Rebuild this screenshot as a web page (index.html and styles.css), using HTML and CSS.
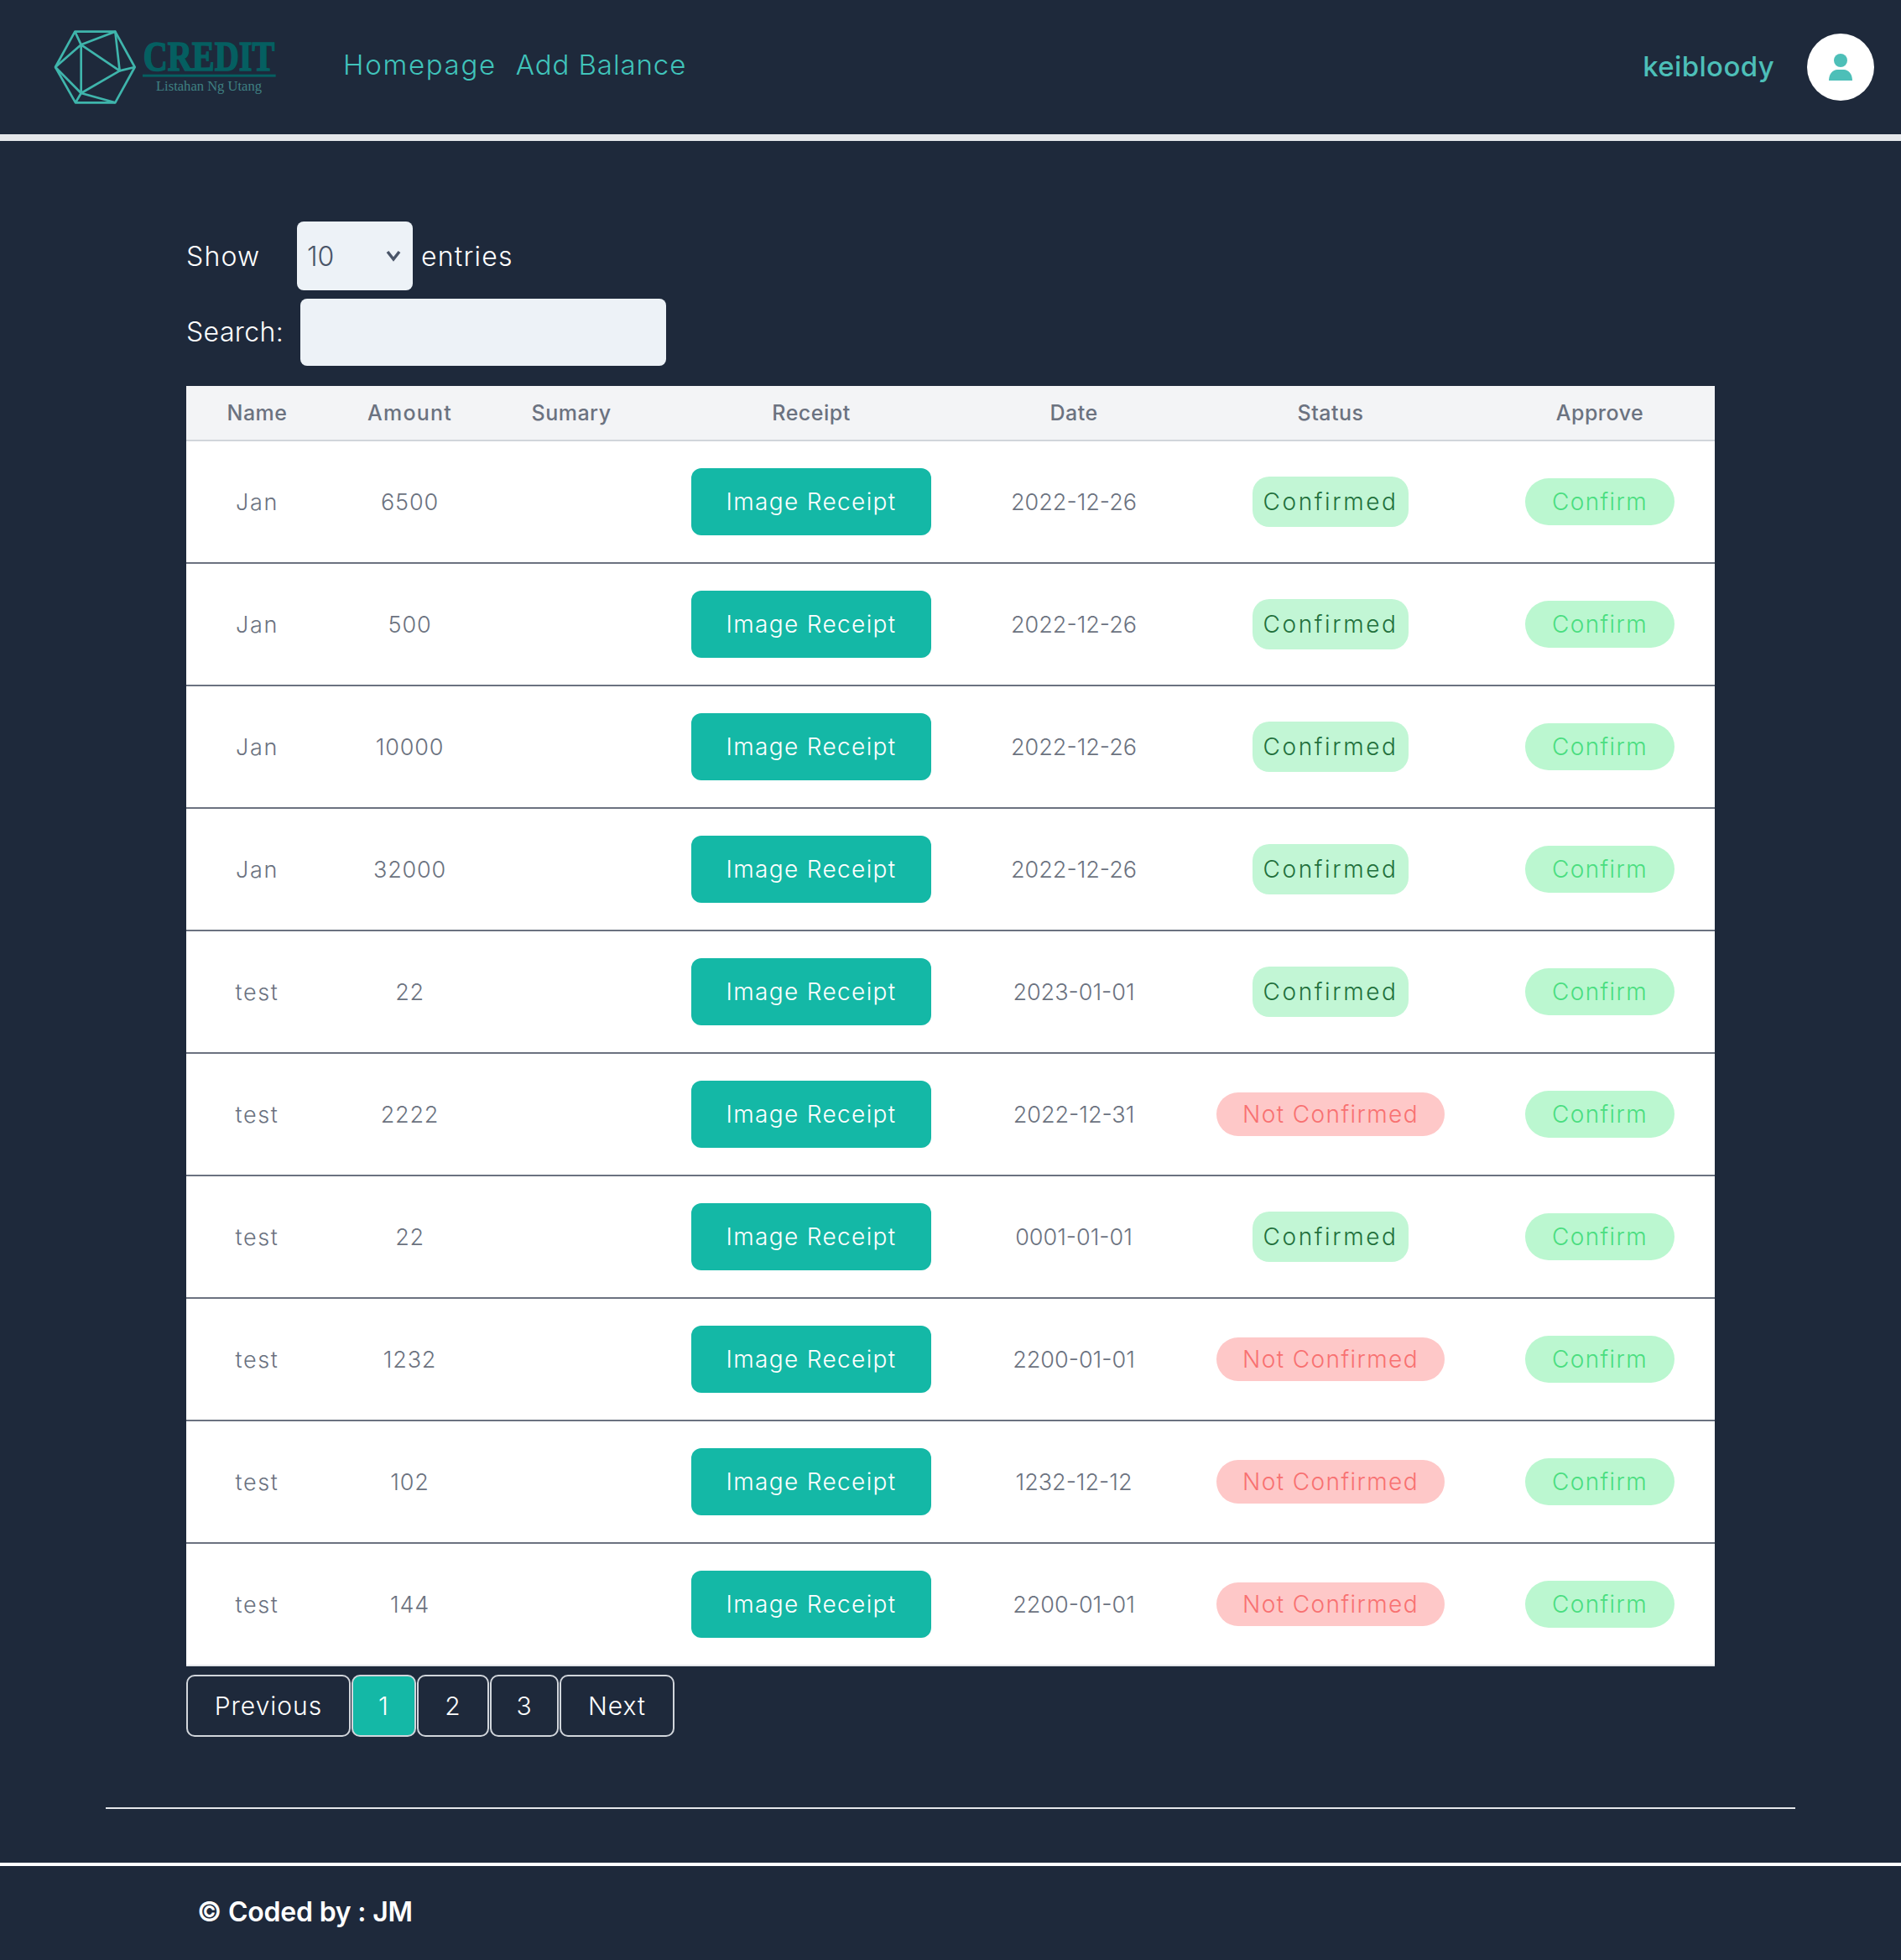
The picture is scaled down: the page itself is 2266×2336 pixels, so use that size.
FILE: index.html
```html
<!DOCTYPE html>
<html lang="en">
<head>
    <meta charset="UTF-8">
    <meta name="viewport" content="width=device-width, initial-scale=1.0">
    <title>Credit - Listahan Ng Utang</title>
    <link rel="stylesheet" href="styles.css">
</head>
<body>
    <header class="topbar">
        <svg class="logo" viewBox="0 0 900 330" width="300" height="110" role="img" aria-label="Credit logo">
            <g class="logo-lines">
                <path d="M118 38H262L332 165L262 292H120L48 165Z"/>
                <path d="M118 38L140 85L262 38L278 178L332 165"/>
                <path d="M48 165L140 85V258L48 165"/>
                <path d="M140 85L278 178L140 258L262 292"/>
                <path d="M140 258L120 292"/>
            </g>
            <text class="logo-name" transform="translate(362 176) scale(0.795 1)">CREDIT</text>
            <rect class="logo-rule" x="360" y="191" width="476" height="9"/>
            <text class="logo-sub" x="408" y="250" textLength="378" lengthAdjust="spacingAndGlyphs">Listahan Ng Utang</text>
        </svg>
        <nav class="nav">
            <a href="#" class="nav-home">Homepage</a>
            <a href="#" class="nav-add">Add Balance</a>
        </nav>
        <div class="user">
            <span class="username">keibloody</span>
            <span class="avatar">
                <svg viewBox="0 0 28 32" width="28" height="32">
                    <circle cx="14" cy="8" r="8"/>
                    <path d="M0 32C0 24 5 19 10 19H18C23 19 28 24 28 32Z"/>
                </svg>
            </span>
        </div>
    </header>

    <main class="content">
        <div class="length-row">
            <label class="label show-label">Show</label>
            <div class="select-box">
                <span>10</span>
                <svg viewBox="0 0 20 14" width="20" height="14"><path d="M3 2L10 11L17 2"/></svg>
            </div>
            <span class="label entries-label">entries</span>
        </div>
        <div class="search-row">
            <label class="label search-label">Search:</label>
            <input class="search-input" type="text">
        </div>

        <table class="data-table">
            <thead>
                <tr>
                    <th class="c-name">Name</th>
                    <th class="c-amount">Amount</th>
                    <th class="c-summary">Sumary</th>
                    <th class="c-receipt">Receipt</th>
                    <th class="c-date">Date</th>
                    <th class="c-status">Status</th>
                    <th class="c-approve">Approve</th>
                </tr>
            </thead>
            <tbody>
                <tr>
                    <td>Jan</td><td>6500</td><td></td>
                    <td><a href="#" class="btn-receipt">Image Receipt</a></td>
                    <td>2022-12-26</td>
                    <td><span class="badge-ok">Confirmed</span></td>
                    <td><a href="#" class="btn-confirm">Confirm</a></td>
                </tr>
                <tr>
                    <td>Jan</td><td>500</td><td></td>
                    <td><a href="#" class="btn-receipt">Image Receipt</a></td>
                    <td>2022-12-26</td>
                    <td><span class="badge-ok">Confirmed</span></td>
                    <td><a href="#" class="btn-confirm">Confirm</a></td>
                </tr>
                <tr>
                    <td>Jan</td><td>10000</td><td></td>
                    <td><a href="#" class="btn-receipt">Image Receipt</a></td>
                    <td>2022-12-26</td>
                    <td><span class="badge-ok">Confirmed</span></td>
                    <td><a href="#" class="btn-confirm">Confirm</a></td>
                </tr>
                <tr>
                    <td>Jan</td><td>32000</td><td></td>
                    <td><a href="#" class="btn-receipt">Image Receipt</a></td>
                    <td>2022-12-26</td>
                    <td><span class="badge-ok">Confirmed</span></td>
                    <td><a href="#" class="btn-confirm">Confirm</a></td>
                </tr>
                <tr>
                    <td>test</td><td>22</td><td></td>
                    <td><a href="#" class="btn-receipt">Image Receipt</a></td>
                    <td>2023-01-01</td>
                    <td><span class="badge-ok">Confirmed</span></td>
                    <td><a href="#" class="btn-confirm">Confirm</a></td>
                </tr>
                <tr>
                    <td>test</td><td>2222</td><td></td>
                    <td><a href="#" class="btn-receipt">Image Receipt</a></td>
                    <td>2022-12-31</td>
                    <td><span class="badge-no">Not Confirmed</span></td>
                    <td><a href="#" class="btn-confirm">Confirm</a></td>
                </tr>
                <tr>
                    <td>test</td><td>22</td><td></td>
                    <td><a href="#" class="btn-receipt">Image Receipt</a></td>
                    <td>0001-01-01</td>
                    <td><span class="badge-ok">Confirmed</span></td>
                    <td><a href="#" class="btn-confirm">Confirm</a></td>
                </tr>
                <tr>
                    <td>test</td><td>1232</td><td></td>
                    <td><a href="#" class="btn-receipt">Image Receipt</a></td>
                    <td>2200-01-01</td>
                    <td><span class="badge-no">Not Confirmed</span></td>
                    <td><a href="#" class="btn-confirm">Confirm</a></td>
                </tr>
                <tr>
                    <td>test</td><td>102</td><td></td>
                    <td><a href="#" class="btn-receipt">Image Receipt</a></td>
                    <td>1232-12-12</td>
                    <td><span class="badge-no">Not Confirmed</span></td>
                    <td><a href="#" class="btn-confirm">Confirm</a></td>
                </tr>
                <tr>
                    <td>test</td><td>144</td><td></td>
                    <td><a href="#" class="btn-receipt">Image Receipt</a></td>
                    <td>2200-01-01</td>
                    <td><span class="badge-no">Not Confirmed</span></td>
                    <td><a href="#" class="btn-confirm">Confirm</a></td>
                </tr>
            </tbody>
        </table>

        <div class="pager">
            <a href="#" class="page p-prev">Previous</a>
            <a href="#" class="page p-one active">1</a>
            <a href="#" class="page p-two">2</a>
            <a href="#" class="page p-three">3</a>
            <a href="#" class="page p-next">Next</a>
        </div>
    </main>

    <hr class="divider">

    <footer class="footer">© Coded by : JM</footer>
</body>
</html>
```

FILE: styles.css
```css
* {box-sizing: border-box;}
body {margin: 0; background: #1e293b; font-family: Inter, "Noto Sans", sans-serif; color: #fff;}
a {text-decoration: none;}

/* header */
.topbar {display: flex; align-items: center; height: 168px; padding: 0 32px 0 50px; border-bottom: 8px solid #e5e7eb;}
.logo {display: block; flex: none;}
.logo-lines {fill: none; stroke: #3fb5ac; stroke-width: 8; stroke-linejoin: round;}
.logo-name {font-family: "Liberation Serif", serif; font-weight: bold; font-size: 152px; fill: #055f61; stroke: #055f61; stroke-width: 5;}
.logo-rule {fill: #055f61;}
.logo-sub {font-family: "Liberation Serif", serif; font-size: 50px; fill: #3f8082;}
.nav {display: flex; gap: 23px; margin-left: 59px; margin-top: -7px; font-size: 33px; font-weight: 300;}
.nav a {color: #40c4bb;}
.nav-home {letter-spacing: 1.7px;}
.nav-add {letter-spacing: 0.9px;}
.user {display: flex; align-items: center; gap: 39px; margin-left: auto;}
.username {margin-top: -3px; font-size: 33px; font-weight: 500; color: #4dbfb8; letter-spacing: 0.35px;}
.avatar {display: flex; align-items: center; justify-content: center; width: 80px; height: 80px; border-radius: 50%; background: #fff;}
.avatar svg {fill: #4dbfb8;}

/* table controls */
.content {padding: 96px 222px 0;}
.label {font-size: 32px; font-weight: 300; letter-spacing: 1.2px;}
.length-row {display: flex; align-items: center; height: 82px;}
.show-label {width: 132px;}
.select-box {display: flex; align-items: center; justify-content: space-between; width: 138px; height: 82px; padding: 0 13px 0 12px; border-radius: 8px; background: #edf2f7; color: #4a5568; font-size: 32px; font-weight: 300;}
.select-box svg {fill: none; stroke: #4a5568; stroke-width: 3.5;}
.entries-label {margin-left: 10px;}
.search-row {display: flex; align-items: center; height: 80px; margin-top: 10px; margin-bottom: 24px;}
.search-label {width: 136px; margin-top: -2px; letter-spacing: 0.4px;}
.search-input {width: 436px; height: 80px; border: 0; border-radius: 8px; background: #edf2f7;}

/* table */
.data-table {width: 1822px; border-collapse: collapse; table-layout: fixed; background: #fff; color: #6b7280; text-align: center;}
.data-table th {height: 65px; padding: 0; border-bottom: 2px solid #d1d5db; background: #f3f4f6; font-size: 25px; font-weight: 500; letter-spacing: 0.5px;}
.data-table td {height: 146px; padding: 0; border-bottom: 2px solid #6b7280; font-size: 27px; font-weight: 300; letter-spacing: 0.8px;}
.data-table tr:last-child td {border-bottom-color: #e5e7eb;}
.data-table td:first-child {letter-spacing: 1.6px;}
.data-table td:nth-child(5) {letter-spacing: 0;}
.c-name {width: 169px;}
.data-table .c-amount {width: 195px; letter-spacing: 1.2px;}
.c-summary {width: 190px;}
.c-receipt {width: 382px;}
.c-date {width: 244px;}
.c-status {width: 368px;}
.c-approve {width: 274px;}

.btn-receipt {display: inline-flex; align-items: center; justify-content: center; width: 286px; height: 80px; border-radius: 12px; background: #14b8a6; color: #fff; font-size: 28px; font-weight: 300; letter-spacing: 1.35px; vertical-align: middle;}
.badge-ok {display: inline-flex; align-items: center; justify-content: center; width: 186px; height: 60px; border-radius: 20px; background: #c2f6d5; color: #22703c; font-size: 28px; font-weight: 300; letter-spacing: 2.6px; vertical-align: middle;}
.badge-no {display: inline-flex; align-items: center; justify-content: center; width: 272px; height: 52px; border-radius: 26px; background: #fec8c8; color: #f87171; font-size: 28px; font-weight: 300; letter-spacing: 1.4px; vertical-align: middle;}
.btn-confirm {display: inline-flex; align-items: center; justify-content: center; width: 178px; height: 56px; border-radius: 28px; background: #bbf7d0; color: #4ade80; font-size: 28px; font-weight: 300; letter-spacing: 1.4px; vertical-align: middle;}

/* pagination */
.pager {display: flex; gap: 1px; margin-top: 10px;}
.page {display: flex; align-items: center; justify-content: center; height: 74px; border: 2px solid #d1d5db; border-radius: 10px; color: #fff; font-size: 30px; font-weight: 300; letter-spacing: 1px;}
.page.active {background: #14b8a6;}
.p-prev {width: 196px;}
.p-one {width: 77px;}
.p-two {width: 86px;}
.p-three {width: 82px;}
.p-next {width: 137px;}

/* footer */
.divider {height: 2px; margin: 84px 126px 0; border: 0; background: #e5e7eb;}
.footer {display: flex; align-items: center; height: 116px; margin-top: 64px; padding: 0 0 3px 235px; border-top: 4px solid #fff; font-size: 32px; font-weight: 600; letter-spacing: -0.2px;}
```
